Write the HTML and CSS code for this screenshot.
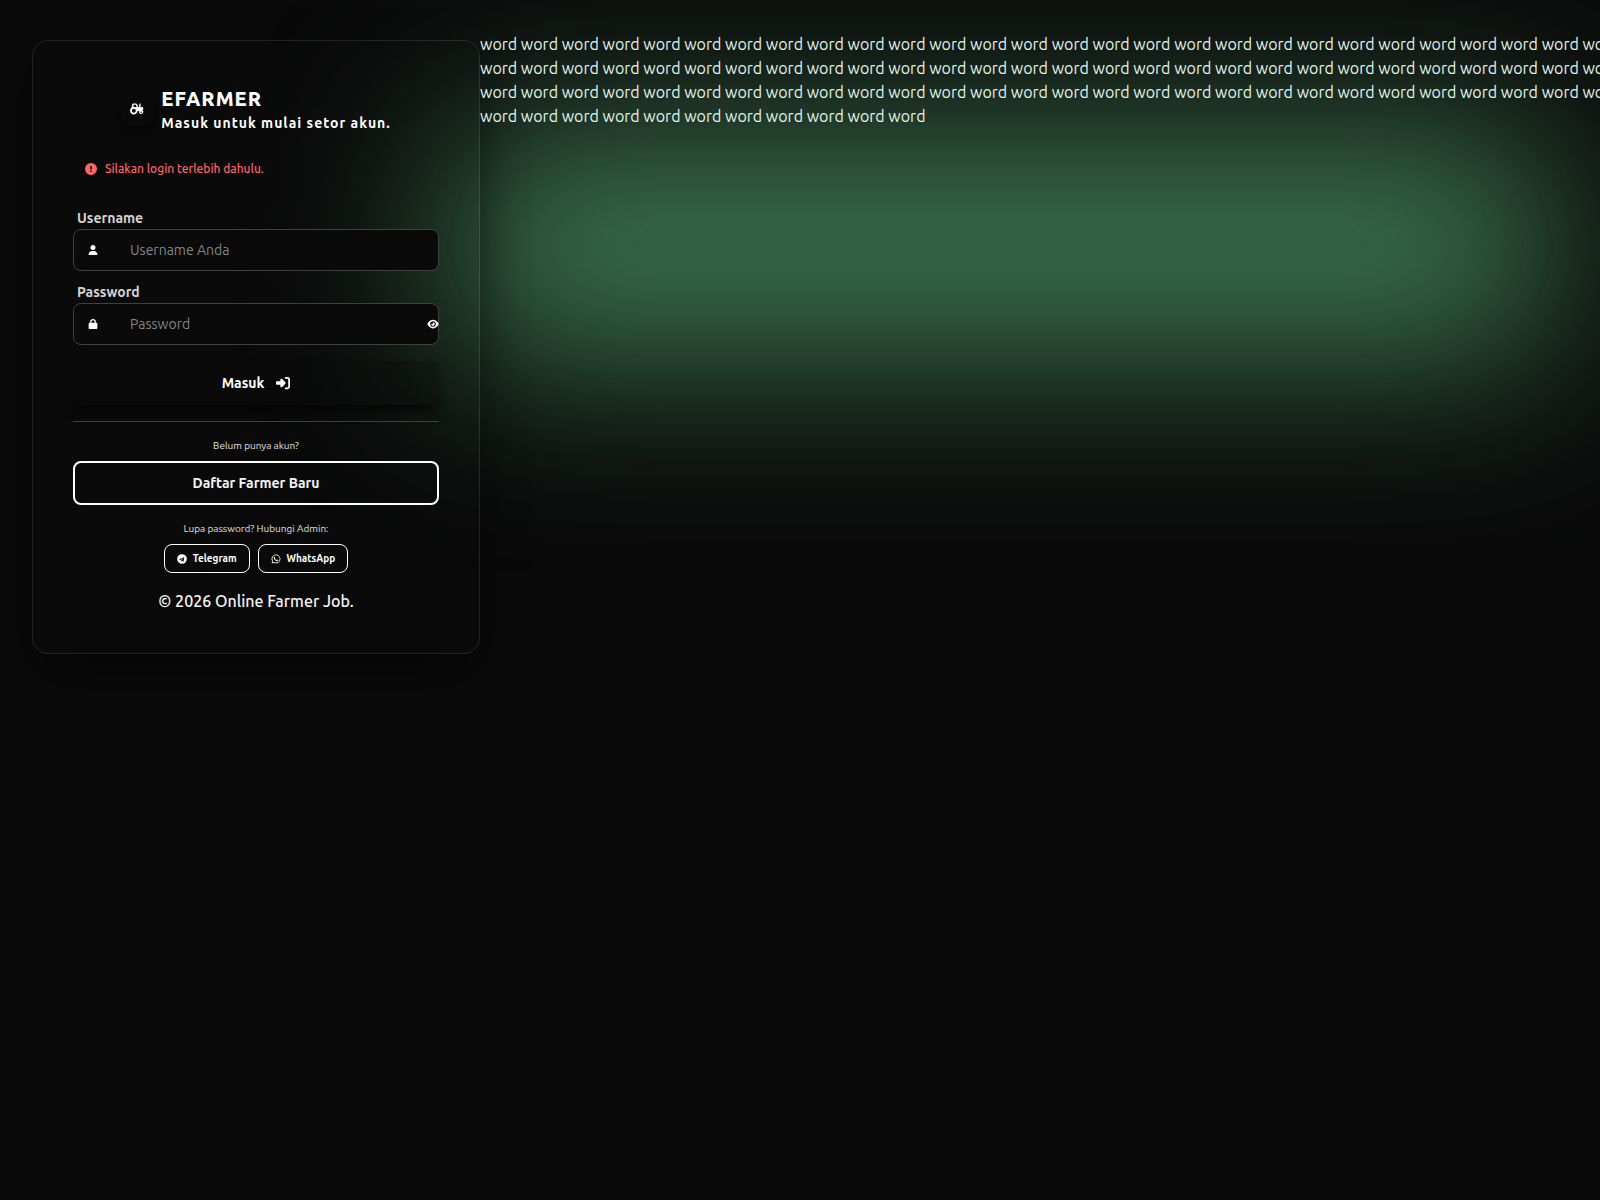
FILE: index.html
```html
<!DOCTYPE html>
<html lang="id">
<head>
<meta charset="utf-8">
<meta name="viewport" content="width=device-width, initial-scale=1">
<title>EFARMER - Masuk</title>
<link rel="stylesheet" href="styles.css">
</head>
<body>
<div class="page">
  <div class="glow" aria-hidden="true"></div>
  <main class="card">
    <header class="brand">
      <span class="brand-logo"><svg viewBox="0 0 640 512" width="14" height="12" fill="currentColor" aria-hidden="true"><path fill-rule="evenodd" d="M96 64c0-35 29-64 64-64h107c26 0 50 16 60 40l50 120h39V88c0-31 10-56 25-76 10-14 30-16 44-5s16 30 5 44c-7 9-10 20-10 37v72h64c35 0 64 29 64 64v32c0 25-15 47-37 58A96 96 0 1 1 422 352h-71A176 176 0 1 1 64 194V160c0-18 14-32 32-32zm64 0v96h147L267 64zm16 184a88 88 0 1 0 0 176 88 88 0 0 0 0-176zm336 118a34 34 0 1 0 0 68 34 34 0 0 0 0-68z"/></svg></span>
      <div>
        <h1 class="brand-name">EFARMER</h1>
        <p class="brand-tagline">Masuk untuk mulai setor akun.</p>
      </div>
    </header>
    <p class="alert" role="alert">
      <svg viewBox="0 0 512 512" width="12" height="12" fill="currentColor" aria-hidden="true"><path fill-rule="evenodd" d="M256 0a256 256 0 1 1 0 512 256 256 0 1 1 0-512zm-32 128v144h64V128zm0 192v64h64v-64z"/></svg>
      Silakan login terlebih dahulu.
    </p>
    <form class="form">
      <label class="label" for="username">Username</label>
      <div class="field">
        <svg viewBox="0 0 448 512" width="10" height="10" fill="currentColor" aria-hidden="true"><path d="M224 256a128 128 0 1 0 0-256 128 128 0 1 0 0 256zm-46 48C80 304 0 384 0 482c0 16 13 30 30 30h388c17 0 30-14 30-30 0-98-80-178-178-178z"/></svg>
        <input id="username" type="text" placeholder="Username Anda">
      </div>
      <label class="label" for="password">Password</label>
      <div class="field">
        <svg viewBox="0 0 448 512" width="10" height="10" fill="currentColor" aria-hidden="true"><path d="M144 144v48h160v-48a80 80 0 0 0-160 0zm-64 48v-48a144 144 0 0 1 288 0v48h16c35 0 64 29 64 64v192c0 35-29 64-64 64H64c-35 0-64-29-64-64V256c0-35 29-64 64-64z"/></svg>
        <input id="password" type="password" placeholder="Password">
        <button class="reveal" type="button" aria-label="Lihat password"><svg viewBox="0 0 576 512" width="12" height="10" fill="currentColor" aria-hidden="true"><path fill-rule="evenodd" d="M288 32c-81 0-145 37-193 81C49 157 17 208 3 244c-4 8-4 17 0 25 14 36 46 87 92 131 48 43 112 80 193 80s145-37 193-80c46-44 78-95 92-131 4-8 4-17 0-25-14-36-46-87-92-131-48-44-112-81-193-81zM144 256a144 144 0 1 1 288 0 144 144 0 1 1-288 0zm144-64c0 35-29 64-64 64-7 0-14-1-20-3-6-2-12 2-12 8 0 53 43 91 96 91s96-43 96-96-38-96-91-96c-6 0-10 6-8 12 2 6 3 13 3 20z"/></svg></button>
      </div>
      <button class="submit" type="submit">Masuk
        <svg viewBox="0 0 512 512" width="14" height="14" fill="currentColor" aria-hidden="true"><path d="M352 96h64c18 0 32 14 32 32v256c0 18-14 32-32 32h-64a32 32 0 0 0 0 64h64c53 0 96-43 96-96V128c0-53-43-96-96-96h-64a32 32 0 0 0 0 64zm-9 183c12-13 12-33 0-46L215 105c-15-15-55-10-55 23v64H32c-18 0-32 14-32 32v64c0 18 14 32 32 32h128v64c0 33 40 38 55 23z"/></svg>
      </button>
    </form>
    <section class="register">
      <p class="note">Belum punya akun?</p>
      <a class="outline" href="#daftar">Daftar Farmer Baru</a>
    </section>
    <section class="help">
      <p class="note">Lupa password? Hubungi Admin:</p>
      <div class="contacts">
        <a class="chip" href="#telegram"><svg viewBox="0 0 496 512" width="10" height="10" fill="currentColor" aria-hidden="true"><path fill-rule="evenodd" d="M248 8a248 248 0 1 1 0 496 248 248 0 1 1 0-496zm115 169c1-14-8-18-18-15-76 31-152 63-228 96-14 6-20 22 2 28l55 17 129-81c11-7 15 0 8 6L207 323l-4 58c8 0 12-3 16-8l28-26 57 42c10 6 18 3 21-10z"/></svg>Telegram</a>
        <a class="chip" href="#whatsapp"><svg viewBox="0 0 448 512" width="10" height="10" fill="currentColor" aria-hidden="true"><path fill-rule="evenodd" d="M381 97A222 222 0 0 0 31 365L0 480l118-31A222 222 0 0 0 381 97zM224 439c-33 0-66-9-94-26l-7-4-70 18 19-68-4-7A185 185 0 1 1 224 439zm101-138c-6-3-33-16-38-18s-9-3-13 3l-17 21c-3 4-6 4-12 2-33-17-54-29-76-67-6-10 6-9 16-30 2-4 1-7 0-10l-17-41c-5-11-9-10-13-10h-11c-4 0-10 1-15 7s-20 19-20 47 20 54 23 58c3 3 40 61 96 86 36 15 50 17 68 14 11-2 33-14 38-27s5-24 3-26z"/></svg>WhatsApp</a>
      </div>
    </section>
    <footer class="copyright">© 2026 Online Farmer Job.</footer>
  </main>
  <p class="filler">word word word word word word word word word word word word word word word word word word word word word word word word word word word word word word word word word word word word word word word word word word word word word word word word word word word word word word word word word word word word word word word word word word word word word word word word word word word word word word word word word word word word word word word word word word word word word word word</p>
</div>
</body>
</html>
```
FILE: styles.css
```css
* { box-sizing: border-box; margin: 0; }

body {
  background: #0a0a0a;
  color: #fff;
  font-family: Ubuntu, "Noto Sans", sans-serif;
  font-size: 16px;
  line-height: 24px;
}

.page {
  position: relative;
  display: flex;
  align-items: flex-start;
  min-height: 100vh;
  padding: 32px;
  overflow: hidden;
}

.glow {
  position: absolute;
  top: 132px;
  left: 28%;
  right: 3%;
  height: 228px;
  border-radius: 24px;
  background: #3d7550;
  filter: blur(90px);
}

.card {
  position: relative;
  flex: 0 0 448px;
  margin-top: 8px;
  padding: 40px;
  border: 1px solid rgba(255, 255, 255, 0.1);
  border-radius: 16px;
  box-shadow: 0 20px 48px rgba(0, 0, 0, 0.4);
}

.filler {
  position: relative;
  flex: 0 0 calc(100vw - 456px);
  color: #e0f2e9;
}

.brand {
  display: flex;
  justify-content: center;
  align-items: center;
  gap: 8px;
  padding-top: 4px;
}

.brand-logo {
  display: grid;
  place-items: center;
  width: 32px;
  height: 32px;
  border-radius: 8px;
  background: #0a0a0a;
  box-shadow: 0 6px 16px rgba(0, 0, 0, 0.5);
}

.brand-name { font-size: 20px; line-height: 28px; font-weight: 800; letter-spacing: 1px; }
.brand-tagline { font-size: 14px; line-height: 20px; font-weight: 700; letter-spacing: 1px; }

.alert {
  display: flex;
  align-items: center;
  gap: 8px;
  margin-top: 24px;
  padding: 4px 12px;
  color: #ff6467;
  font-size: 12px;
  font-weight: 500;
  line-height: 16px;
}

.form {
  display: flex;
  flex-direction: column;
  margin-top: 28px;
}

.label {
  padding: 0 4px 2px;
  color: #d4d4d4;
  font-size: 14px;
  font-weight: 600;
  line-height: 18px;
}

.field {
  display: flex;
  align-items: center;
  height: 42px;
  margin-bottom: 12px;
  padding-left: 14px;
  border: 1px solid #404040;
  border-radius: 8px;
  background: #0a0a0a;
}

.field input {
  flex: 1;
  min-width: 0;
  margin-left: 32px;
  padding: 0;
  border: 0;
  outline: 0;
  background: none;
  color: #fff;
  font: 400 14px/20px Ubuntu, "Noto Sans", sans-serif;
}

.field input::placeholder { color: #858585; }

.reveal {
  display: flex;
  margin-right: -1px;
  padding: 0;
  border: 0;
  background: none;
  color: #fff;
}

.submit {
  display: flex;
  justify-content: center;
  align-items: center;
  gap: 12px;
  height: 44px;
  margin-top: 4px;
  border: 0;
  border-radius: 8px;
  background: rgba(10, 10, 10, 0.3);
  box-shadow: 0 8px 12px -2px rgba(0, 0, 0, 0.6);
  color: #fff;
  font: 600 14px/20px Ubuntu, "Noto Sans", sans-serif;
}

.register {
  margin-top: 16px;
  padding-top: 16px;
  border-top: 1px solid #404040;
}

.note {
  margin-bottom: 8px;
  color: #e0e0e0;
  font-size: 10px;
  line-height: 15px;
  text-align: center;
}

.outline {
  display: block;
  padding: 10px;
  border: 2px solid #fff;
  border-radius: 8px;
  color: #f5f5f5;
  font-size: 14px;
  font-weight: 600;
  line-height: 20px;
  text-align: center;
  text-decoration: none;
}

.help { margin-top: 16px; }

.contacts {
  display: flex;
  justify-content: center;
  gap: 8px;
}

.chip {
  display: flex;
  align-items: center;
  gap: 6px;
  padding: 6px 12px;
  border: 1px solid #fff;
  border-radius: 8px;
  color: #fff;
  font-size: 10px;
  font-weight: 600;
  line-height: 15px;
  text-decoration: none;
}

.copyright {
  margin-top: 16px;
  color: #f5f5f5;
  font-weight: 500;
  text-align: center;
}
```
